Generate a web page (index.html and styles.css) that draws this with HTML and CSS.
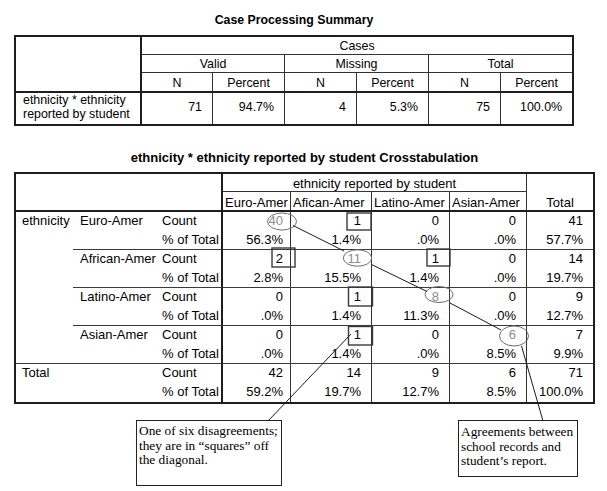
FILE: index.html
```html
<!DOCTYPE html>
<html>
<head>
<meta charset="utf-8">
<title>Crosstabulation</title>
<link rel="stylesheet" href="styles.css">
</head>
<body>
<div class="page">
  <section class="block block-cps">
    <h1 class="title title-cps">Case Processing Summary</h1>
    <table class="cps">
      <colgroup>
        <col class="w-lab"><col class="w-71"><col class="w-72"><col class="w-72"><col class="w-72"><col class="w-72"><col class="w-71">
      </colgroup>
      <tr class="r-cases">
        <td class="corner" rowspan="3"></td>
        <td class="hd" colspan="6">Cases</td>
      </tr>
      <tr class="r-grp">
        <td class="hd br" colspan="2">Valid</td>
        <td class="hd br" colspan="2">Missing</td>
        <td class="hd" colspan="2">Total</td>
      </tr>
      <tr class="r-sub">
        <td class="hd sub br">N</td><td class="hd sub br">Percent</td>
        <td class="hd sub br">N</td><td class="hd sub br">Percent</td>
        <td class="hd sub br">N</td><td class="hd sub">Percent</td>
      </tr>
      <tr class="r-data">
        <td class="rowlab">ethnicity * ethnicity<br>reported by student</td>
        <td class="num br">71</td><td class="num br">94.7%</td>
        <td class="num br">4</td><td class="num br">5.3%</td>
        <td class="num br">75</td><td class="num">100.0%</td>
      </tr>
    </table>
  </section>

  <section class="block block-ct">
    <h2 class="title title-ct">ethnicity * ethnicity reported by student Crosstabulation</h2>
    <table class="ct">
      <colgroup>
        <col class="k1"><col class="k2"><col class="k3"><col class="k4"><col class="k5"><col class="k6"><col class="k7"><col class="k8">
      </colgroup>
      <tr class="h1">
        <td class="corner" colspan="3" rowspan="2"></td>
        <td class="grp" colspan="4">ethnicity reported by student</td>
        <td class="toth" rowspan="2">Total</td>
      </tr>
      <tr class="h2">
        <td class="ch">Euro-Amer</td><td class="ch">Afican-Amer</td><td class="ch">Latino-Amer</td><td class="ch">Asian-Amer</td>
      </tr>

      <tr class="cnt">
        <td class="v1 sep" rowspan="8">ethnicity</td>
        <td class="v2 sep" rowspan="2">Euro-Amer</td>
        <td class="v3">Count</td>
        <td class="n e diag">40</td><td class="n">1</td><td class="n">0</td><td class="n">0</td><td class="n t">41</td>
      </tr>
      <tr class="pct">
        <td class="v3 sep">% of Total</td>
        <td class="n e sep">56.3%</td><td class="n sep">1.4%</td><td class="n sep">.0%</td><td class="n sep">.0%</td><td class="n t sep">57.7%</td>
      </tr>

      <tr class="cnt">
        <td class="v2 sep" rowspan="2">African-Amer</td>
        <td class="v3">Count</td>
        <td class="n e">2</td><td class="n diag">11</td><td class="n">1</td><td class="n">0</td><td class="n t">14</td>
      </tr>
      <tr class="pct">
        <td class="v3 sep">% of Total</td>
        <td class="n e sep">2.8%</td><td class="n sep">15.5%</td><td class="n sep">1.4%</td><td class="n sep">.0%</td><td class="n t sep">19.7%</td>
      </tr>

      <tr class="cnt">
        <td class="v2 sep" rowspan="2">Latino-Amer</td>
        <td class="v3">Count</td>
        <td class="n e">0</td><td class="n">1</td><td class="n diag">8</td><td class="n">0</td><td class="n t">9</td>
      </tr>
      <tr class="pct">
        <td class="v3 sep">% of Total</td>
        <td class="n e sep">.0%</td><td class="n sep">1.4%</td><td class="n sep">11.3%</td><td class="n sep">.0%</td><td class="n t sep">12.7%</td>
      </tr>

      <tr class="cnt">
        <td class="v2 sep" rowspan="2">Asian-Amer</td>
        <td class="v3">Count</td>
        <td class="n e">0</td><td class="n">1</td><td class="n">0</td><td class="n diag">6</td><td class="n t">7</td>
      </tr>
      <tr class="pct">
        <td class="v3 sep">% of Total</td>
        <td class="n e sep">.0%</td><td class="n sep">1.4%</td><td class="n sep">.0%</td><td class="n sep">8.5%</td><td class="n t sep">9.9%</td>
      </tr>

      <tr class="cnt">
        <td class="v1" colspan="2" rowspan="2">Total</td>
        <td class="v3">Count</td>
        <td class="n e">42</td><td class="n">14</td><td class="n">9</td><td class="n">6</td><td class="n t">71</td>
      </tr>
      <tr class="pct">
        <td class="v3">% of Total</td>
        <td class="n e">59.2%</td><td class="n">19.7%</td><td class="n">12.7%</td><td class="n">8.5%</td><td class="n t">100.0%</td>
      </tr>
    </table>
  </section>

  <div class="notes">
    <p class="note note-left">One of six disagreements; they are in “squares” off the diagonal.</p>
    <p class="note note-right">Agreements between school records and student’s report.</p>
  </div>

  <svg class="overlay" width="607" height="491" viewBox="0 0 607 491" aria-hidden="true">
    <g class="rings">
      <ellipse cx="282" cy="221.5" rx="14.5" ry="8.5"/>
      <ellipse cx="357.5" cy="258" rx="14.2" ry="8.2"/>
      <ellipse cx="439" cy="294.5" rx="14" ry="8"/>
      <ellipse cx="514" cy="336" rx="14.5" ry="10"/>
    </g>
    <g class="squares">
      <rect x="347" y="213" width="24" height="17"/>
      <rect x="272" y="248" width="23" height="19"/>
      <rect x="427" y="249" width="23" height="17"/>
      <rect x="348.5" y="287" width="24" height="19"/>
      <rect x="348.5" y="326.5" width="24" height="18.5"/>
    </g>
    <g class="leaders">
      <line x1="293" y1="225.5" x2="344" y2="251"/>
      <line x1="371.5" y1="264.5" x2="427" y2="291.5"/>
      <line x1="450" y1="303" x2="501" y2="330"/>
      <line x1="521.5" y1="346" x2="543" y2="421"/>
      <line x1="351" y1="334" x2="268" y2="421"/>
    </g>
  </svg>
</div>
</body>
</html>
```

FILE: styles.css
```css
html, body {
  margin: 0;
  padding: 0;
  background: #fff;
}

body {
  font-family: "Liberation Sans", Arial, sans-serif;
  color: #000;
}

.page {
  position: relative;
  width: 607px;
  height: 491px;
  overflow: hidden;
}

.block {
  margin-left: 14px;
}

.block-cps {
  width: 560px;
  padding-top: 13px;
}

.block-ct {
  width: 581px;
  margin-top: 24px;
}

.title {
  margin: 0;
  font-weight: bold;
  text-align: center;
  line-height: 15px;
  white-space: nowrap;
}

.title-cps {
  font-size: 12.3px;
}

.title-ct {
  font-size: 13px;
}

table {
  border-collapse: separate;
  border-spacing: 0;
  table-layout: fixed;
}

td {
  padding: 0;
  white-space: nowrap;
  overflow: visible;
}

/* ---------- Case processing summary ---------- */

.cps {
  width: 560px;
  margin-top: 7px;
  border: 2px solid #1e1e1e;
  font-size: 12.4px;
  line-height: 15px;
}

.cps .w-lab { width: 126px; }
.cps .w-71 { width: 71px; }
.cps .w-72 { width: 72px; }

.cps .r-cases { height: 18px; }
.cps .r-grp { height: 18px; }
.cps .r-sub { height: 20px; }
.cps .r-data { height: 31px; }

.cps .corner {
  border-right: 2px solid #1e1e1e;
  border-bottom: 2px solid #1e1e1e;
}

.cps .hd {
  text-align: center;
  vertical-align: bottom;
  border-bottom: 1px solid #333;
}

.cps .hd.sub {
  border-bottom: 2px solid #1e1e1e;
}

.cps .br {
  border-right: 1px solid #333;
}

.cps .rowlab {
  vertical-align: top;
  padding-left: 7px;
  line-height: 14px;
  border-right: 2px solid #1e1e1e;
}

.cps .num {
  text-align: right;
  vertical-align: middle;
  padding-right: 10px;
  padding-bottom: 2px;
}

/* ---------- Crosstabulation ---------- */

.ct {
  width: 581px;
  margin-top: 7px;
  border: 2px solid #1e1e1e;
  font-size: 13px;
  line-height: 15px;
}

.ct .k1 { width: 57px; }
.ct .k2 { width: 86px; }
.ct .k3 { width: 64px; }
.ct .k4 { width: 68px; }
.ct .k5 { width: 81px; }
.ct .k6 { width: 78px; }
.ct .k7 { width: 77px; }
.ct .k8 { width: 66px; }

.ct .h1 { height: 18px; }
.ct .h2 { height: 20px; }
.ct .cnt { height: 19px; }
.ct .pct { height: 19px; }

.ct .corner {
  border-right: 2px solid #1e1e1e;
  border-bottom: 2px solid #1e1e1e;
}

.ct .grp {
  text-align: center;
  vertical-align: bottom;
  border-right: 1px solid #333;
  border-bottom: 1px solid #333;
}

.ct .toth {
  text-align: center;
  vertical-align: bottom;
  border-bottom: 2px solid #1e1e1e;
}

.ct .ch {
  text-align: left;
  vertical-align: bottom;
  padding-left: 2px;
  border-right: 1px solid #333;
  border-bottom: 2px solid #1e1e1e;
}

.ct .v1,
.ct .v2,
.ct .v3,
.ct .n {
  vertical-align: top;
  padding-top: 1px;
}

.ct .v1 { padding-left: 6px; }
.ct .v2 { padding-left: 7px; }

.ct .v3 {
  padding-left: 3px;
  border-right: 2px solid #1e1e1e;
}

.ct .n {
  text-align: right;
  padding-right: 10px;
  border-right: 1px solid #333;
}

.ct .n.e { padding-right: 7px; }
.ct .n.t { border-right: 0; }

.ct .sep {
  border-bottom: 1px solid #3a3a3a;
}

.ct .diag {
  color: #8c8c8c;
}

/* ---------- Callouts ---------- */

.notes {
  display: flex;
  align-items: flex-start;
  margin-top: 16px;
}

.note {
  margin: 0;
  box-sizing: border-box;
  border: 1px solid #222;
  font-family: "Liberation Serif", "Times New Roman", serif;
  font-size: 13.33px;
  line-height: 14.5px;
  color: #000;
  background: #fff;
}

.note-left {
  width: 146px;
  height: 66px;
  margin-left: 136px;
  padding: 3px 2px 0 2px;
}

.note-right {
  width: 120px;
  height: 57px;
  margin-left: 176px;
  padding: 4px 2px 0 2px;
}

/* ---------- Overlay marks ---------- */

.overlay {
  position: absolute;
  left: 0;
  top: 0;
  pointer-events: none;
}

.rings ellipse {
  fill: none;
  stroke: #6e6e6e;
  stroke-width: 1;
}

.squares rect {
  fill: none;
  stroke: #3a3a3a;
  stroke-width: 1.4;
}

.leaders line {
  stroke: #1a1a1a;
  stroke-width: 1;
}
```
